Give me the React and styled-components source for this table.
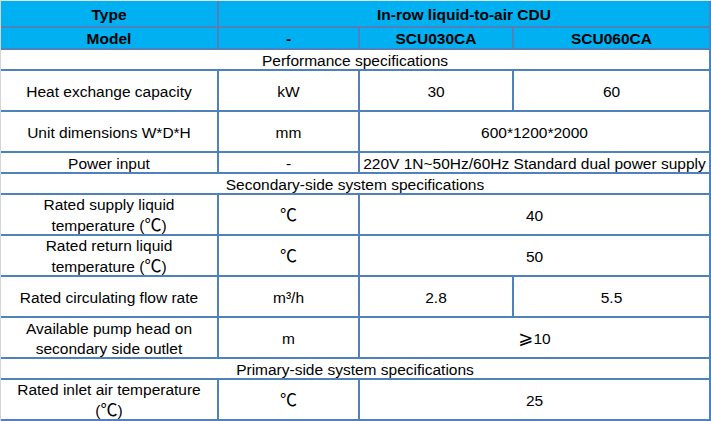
import React from "react";
import styled, { createGlobalStyle } from "styled-components";

const GlobalStyle = createGlobalStyle`
  html, body {
    margin: 0;
    padding: 0;
    background: #fff;
  }
  body {
    font-family: "Liberation Sans", Arial, sans-serif;
  }
`;

const Sheet = styled.div`
  width: 711px;
  height: 421px;
  box-sizing: border-box;
  border-top: 1px solid #e1e1e1;
  border-left: 1px solid #d4d4d4;
  overflow: hidden;
`;

const Table = styled.div`
  display: grid;
  grid-template-columns: 216px 139px 152px 195px;
  gap: 2px;
  padding: 0 2px 2px 0;
  background: #4f81bd;
  width: fit-content;
`;

const Cell = styled.div`
  grid-column: span ${(p) => p.$span || 1};
  height: ${(p) => p.$h}px;
  box-sizing: border-box;
  display: flex;
  align-items: center;
  justify-content: center;
  text-align: center;
  padding: 2px 2px 0;
  background: ${(p) => (p.$head ? "#00b0f0" : "#fff")};
  color: #000;
  font-size: 15.5px;
  font-weight: ${(p) => (p.$head ? 700 : 400)};
  line-height: 20px;
  white-space: nowrap;
`;

/* the degree sign comes from a CJK font in the source sheet, drawn a bit larger */
const Deg = styled.span`
  font-family: "Noto Sans CJK SC", sans-serif;
  font-size: 17px;
  line-height: 1;
`;

const Ge = styled.span`
  font-family: "DejaVu Sans", sans-serif;
  font-size: 18px;
  line-height: 1;
`;

const C = <Deg>℃</Deg>;

const rows = [
  { h: 25, head: true, cells: [{ t: "Type" }, { t: "In-row liquid-to-air CDU", span: 3 }] },
  { h: 20, head: true, cells: [{ t: "Model" }, { t: "-" }, { t: "SCU030CA" }, { t: "SCU060CA" }] },
  { h: 19, cells: [{ t: "Performance specifications", span: 4 }] },
  { h: 39, cells: [{ t: "Heat exchange capacity" }, { t: "kW" }, { t: "30" }, { t: "60" }] },
  { h: 39, cells: [{ t: "Unit dimensions W*D*H" }, { t: "mm" }, { t: "600*1200*2000", span: 2 }] },
  {
    h: 19,
    cells: [
      { t: "Power input" },
      { t: "-" },
      { t: "220V 1N~50Hz/60Hz Standard dual power supply", span: 2 },
    ],
  },
  { h: 19, cells: [{ t: "Secondary-side system specifications", span: 4 }] },
  {
    h: 39,
    cells: [
      { t: <>Rated supply liquid<br />temperature ({C})</> },
      { t: C },
      { t: "40", span: 2 },
    ],
  },
  {
    h: 39,
    cells: [
      { t: <>Rated return liquid<br />temperature ({C})</> },
      { t: C },
      { t: "50", span: 2 },
    ],
  },
  { h: 39, cells: [{ t: "Rated circulating flow rate" }, { t: "m³/h" }, { t: "2.8" }, { t: "5.5" }] },
  {
    h: 39,
    cells: [
      { t: <>Available pump head on<br />secondary side outlet</> },
      { t: "m" },
      { t: <><Ge>⩾</Ge>10</>, span: 2 },
    ],
  },
  { h: 19, cells: [{ t: "Primary-side system specifications", span: 4 }] },
  {
    h: 39,
    cells: [
      { t: <>Rated inlet air temperature<br />({C})</> },
      { t: C },
      { t: "25", span: 2 },
    ],
  },
];

export default function App() {
  return (
    <>
      <GlobalStyle />
      <Sheet>
        <Table>
          {rows.map((row, i) =>
            row.cells.map((c, j) => (
              <Cell key={`${i}-${j}`} $h={row.h} $head={row.head} $span={c.span}>
                <span>{c.t}</span>
              </Cell>
            ))
          )}
        </Table>
      </Sheet>
    </>
  );
}
